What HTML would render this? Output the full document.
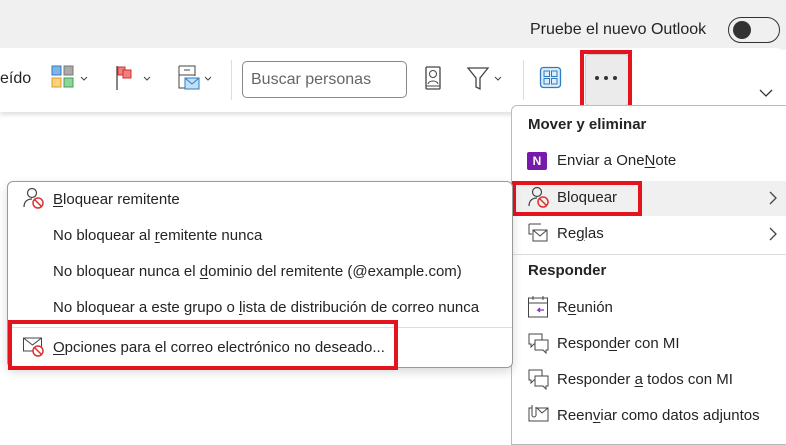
<!DOCTYPE html><html><head><meta charset="utf-8"><style>
*{margin:0;padding:0;box-sizing:border-box}
body{width:786px;height:432px;overflow:hidden;background:#fff;font-family:"Liberation Sans",sans-serif;font-size:15px;color:#242424;position:relative}
.a{position:absolute}
.t{position:absolute;white-space:nowrap;line-height:18px}
u{text-decoration:underline;text-underline-offset:2px}
.red{position:absolute;border:4px solid #e3141e}
.b{font-weight:bold}
</style></head><body>
<div class="a" style="left:0;top:0;width:786px;height:50px;background:#f0f0f0"></div>
<div class="t" style="left:530px;top:21px;font-size:16px">Pruebe el nuevo Outlook</div>
<div class="a" style="left:728px;top:17px;width:52px;height:26px;border:1.5px solid #333;border-radius:13px"></div>
<div class="a" style="left:733px;top:21px;width:18px;height:18px;border-radius:50%;background:#333"></div>
<div class="a" style="left:0;top:48px;width:786px;height:64px;background:#fff;border-radius:0 10px 0 0;box-shadow:0 3px 4px rgba(0,0,0,.12)"></div>
<div class="t" style="left:0;top:70px;font-size:16px">eído</div>
<svg class="a" style="left:50px;top:64px" width="45" height="30"><rect x="2" y="2" width="9" height="9" fill="#7eb4e8" stroke="#2f7cc4"/><rect x="14" y="2" width="9" height="9" fill="#aaa" stroke="#777"/><rect x="2" y="14" width="9" height="9" fill="#fcd27a" stroke="#e0962c"/><rect x="14" y="14" width="9" height="9" fill="#8fd49a" stroke="#3f9f52"/><path d="M31 13l3 3 3-3" stroke="#444" fill="none"/></svg>
<svg class="a" style="left:113px;top:64px" width="45" height="30"><path d="M4 2v24" stroke="#444" stroke-width="1.3"/><rect x="5" y="3" width="7" height="8" fill="#f08080" stroke="#d03030"/><rect x="10" y="6" width="8" height="8" fill="#f08080" stroke="#d03030"/><path d="M31 13l3 3 3-3" stroke="#444" fill="none"/></svg>
<svg class="a" style="left:176px;top:64px" width="45" height="32"><path d="M3 2h16v10M3 2v22h6M3 11h16M8 6h6" stroke="#444" fill="none"/><rect x="9" y="14" width="14" height="11" fill="#bfe0f7" stroke="#2f7cc4"/><path d="M9 14l7 6 7-6" stroke="#2f7cc4" fill="none"/><path d="M29 13l3 3 3-3" stroke="#444" fill="none"/></svg>
<div class="a" style="left:231px;top:60px;width:1px;height:40px;background:#ddd"></div>
<div class="a" style="left:242px;top:61px;width:165px;height:37px;border:1px solid #888;border-radius:5px"></div>
<div class="t" style="left:251px;top:71px;font-size:16px;color:#666">Buscar personas</div>
<svg class="a" style="left:424px;top:66px" width="20" height="26"><rect x="2" y="1" width="14" height="22" rx="1" stroke="#444" fill="none" stroke-width="1.3"/><circle cx="9" cy="8" r="3.5" stroke="#444" fill="none"/><path d="M4 18c1-4 9-4 10 0M2 20h14" stroke="#444" fill="none"/></svg>
<svg class="a" style="left:466px;top:66px" width="40" height="26"><path d="M2 2h20l-8 10v11l-4-2v-9z" stroke="#444" fill="none" stroke-width="1.3"/><path d="M29 11l3 3 3-3" stroke="#444" fill="none"/></svg>
<div class="a" style="left:523px;top:60px;width:1px;height:40px;background:#ddd"></div>
<svg class="a" style="left:539px;top:66px" width="24" height="24"><rect x="1.5" y="1.5" width="20" height="20" rx="3" fill="#dceefb" stroke="#2f7cc4" stroke-width="1.3"/><rect x="5" y="5" width="5.5" height="5.5" fill="none" stroke="#2f7cc4"/><rect x="12.5" y="5" width="5.5" height="5.5" fill="none" stroke="#2f7cc4"/><rect x="5" y="12.5" width="5.5" height="5.5" fill="none" stroke="#2f7cc4"/><rect x="12.5" y="12.5" width="5.5" height="5.5" fill="none" stroke="#2f7cc4"/></svg>
<div class="a" style="left:585px;top:54px;width:44px;height:52px;background:#ebebeb;border:1px solid #ccc;border-radius:4px"></div>
<svg class="a" style="left:594px;top:74px" width="28" height="8"><circle cx="3" cy="4" r="2" fill="#333"/><circle cx="12" cy="4" r="2" fill="#333"/><circle cx="21" cy="4" r="2" fill="#333"/></svg>
<div class="red" style="left:580px;top:50px;width:52px;height:61px"></div>
<svg class="a" style="left:759px;top:88px" width="14" height="10"><path d="M1 2l6 6 6-6" stroke="#333" fill="none" stroke-width="1.3"/></svg>

<!-- right menu -->
<div class="a" style="left:511px;top:105px;width:280px;height:340px;background:#fff;border:1px solid #bbb;border-radius:6px 0 0 0"></div>
<div class="t b" style="left:528px;top:116px">Mover y eliminar</div>
<div class="a" style="left:527px;top:152px;width:20px;height:18px;background:#7719aa;border-radius:2px;color:#fff;font-weight:bold;font-size:12px;text-align:center;line-height:18px">N</div>
<div class="t" style="left:557px;top:152px">Enviar a One<u>N</u>ote</div>
<div class="a" style="left:512px;top:181px;width:274px;height:35px;background:#f0f0f0"></div>
<svg class="a" style="left:527px;top:186px" width="24" height="24"><circle cx="10" cy="6" r="4.5" stroke="#444" fill="none" stroke-width="1.2"/><path d="M2 20c0-6 4-8 8-8" stroke="#444" fill="none" stroke-width="1.2"/><circle cx="16" cy="16" r="5" stroke="#d33" fill="none" stroke-width="1.5"/><path d="M12.5 12.5l7 7" stroke="#d33" stroke-width="1.5"/></svg>
<div class="t" style="left:557px;top:189px">Bloquear</div>
<svg class="a" style="left:768px;top:190px" width="10" height="16"><path d="M2 2l6 6-6 6" stroke="#444" fill="none" stroke-width="1.3"/></svg>
<div class="red" style="left:512px;top:181px;width:130px;height:35px"></div>
<svg class="a" style="left:527px;top:222px" width="24" height="24"><path d="M2 2h12M2 2v10h3" stroke="#444" fill="none"/><rect x="6" y="8" width="14" height="11" fill="none" stroke="#444"/><path d="M6 8l7 6 7-6" stroke="#444" fill="none"/></svg>
<div class="t" style="left:557px;top:225px">Re<u>g</u>las</div>
<svg class="a" style="left:768px;top:226px" width="10" height="16"><path d="M2 2l6 6-6 6" stroke="#444" fill="none" stroke-width="1.3"/></svg>
<div class="a" style="left:512px;top:254px;width:274px;height:1px;background:#ddd"></div>
<div class="t b" style="left:528px;top:262px">Responder</div>
<svg class="a" style="left:527px;top:295px" width="24" height="26"><rect x="1.5" y="3" width="19" height="19" fill="none" stroke="#444"/><path d="M1.5 8h19M6 1v4M16 1v4" stroke="#444"/><path d="M17 15h-6l2-2M11 15l2 2" stroke="#8a2bc4" fill="none" stroke-width="1.3"/></svg>
<div class="t" style="left:557px;top:299px">R<u>e</u>unión</div>
<svg class="a" style="left:527px;top:332px" width="24" height="24"><path d="M2 2h13v10H7l-3 3v-3H2z" stroke="#444" fill="none"/><path d="M8 8h13v10h-2v3l-3-3H8z" stroke="#444" fill="#fff"/></svg>
<div class="t" style="left:557px;top:335px">Respon<u>d</u>er con MI</div>
<svg class="a" style="left:527px;top:368px" width="24" height="24"><path d="M2 2h13v10H7l-3 3v-3H2z" stroke="#444" fill="none"/><path d="M8 8h13v10h-2v3l-3-3H8z" stroke="#444" fill="#fff"/></svg>
<div class="t" style="left:557px;top:371px">Responder <u>a</u> todos con MI</div>
<svg class="a" style="left:527px;top:404px" width="24" height="24"><rect x="2" y="4" width="19" height="13" fill="none" stroke="#444"/><path d="M10 4l5 5 6-5" stroke="#444" fill="none"/><path d="M5 1v10a2 2 0 0 0 4 0V3" stroke="#444" fill="#fff"/></svg>
<div class="t" style="left:557px;top:407px">Reen<u>v</u>iar como datos adjuntos</div>

<!-- left popup -->
<div class="a" style="left:7px;top:181px;width:506px;height:187px;background:#fff;border:1px solid #999;border-radius:6px;box-shadow:0 4px 10px rgba(0,0,0,.15)"></div>
<svg class="a" style="left:22px;top:187px" width="24" height="24"><circle cx="10" cy="6" r="4.5" stroke="#444" fill="none" stroke-width="1.2"/><path d="M2 20c0-6 4-8 8-8" stroke="#444" fill="none" stroke-width="1.2"/><circle cx="16" cy="16" r="5" stroke="#d33" fill="none" stroke-width="1.5"/><path d="M12.5 12.5l7 7" stroke="#d33" stroke-width="1.5"/></svg>
<div class="t" style="left:53px;top:191px"><u>B</u>loquear remitente</div>
<div class="t" style="left:53px;top:227px">No bloquear al <u>r</u>emitente nunca</div>
<div class="t" style="left:53px;top:263px">No bloquear nunca el <u>d</u>ominio del remitente (@example.com)</div>
<div class="t" style="left:53px;top:299px">No bloquear a este grupo o <u>l</u>ista de distribución de correo nunca</div>
<div class="a" style="left:8px;top:327px;width:504px;height:1px;background:#ddd"></div>
<svg class="a" style="left:22px;top:335px" width="24" height="24"><rect x="1.5" y="3" width="18" height="13" fill="none" stroke="#444"/><path d="M1.5 3l9 7 9-7" stroke="#444" fill="none"/><circle cx="16" cy="16" r="5" fill="#fff" stroke="#d33" stroke-width="1.5"/><path d="M12.5 12.5l7 7" stroke="#d33" stroke-width="1.5"/></svg>
<div class="t" style="left:53px;top:339px"><u>O</u>pciones para el correo electrónico no deseado...</div>
<div class="red" style="left:8px;top:320px;width:390px;height:50px"></div>
</body></html>
